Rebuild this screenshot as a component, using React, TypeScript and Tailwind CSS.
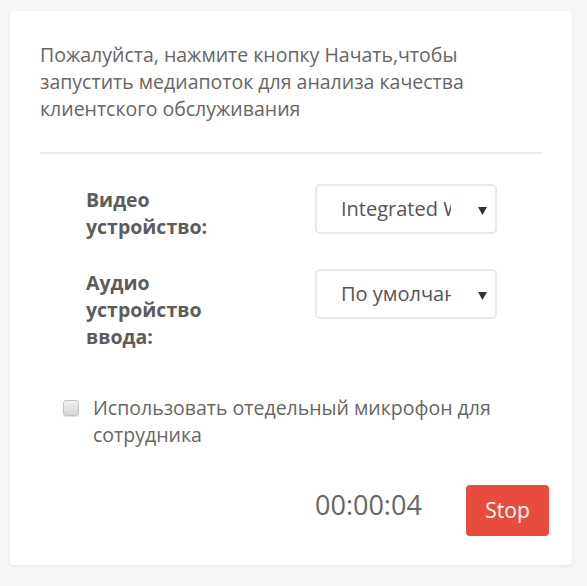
import { useState } from "react";

const Arrow = () => (
  <svg
    className="absolute right-[10px] top-[23px] pointer-events-none"
    width="9"
    height="8"
    viewBox="0 0 9 8"
  >
    <path d="M0 0 H9 L4.5 8 Z" fill="#333" />
  </svg>
);

const DeviceSelect = ({ value, options }: { value: string; options: string[] }) => {
  const [sel, setSel] = useState(value);
  return (
    <div className="relative ml-[89px] w-[182px] shrink-0">
      <select
        value={sel}
        onChange={(e) => setSel(e.target.value)}
        className="appearance-none w-full h-[50px] border-2 border-[#e8e8e8] rounded-[5px] bg-white pl-[24px] pr-[44px] text-[20px] text-[#555] outline-none"
      >
        {options.map((o) => (
          <option key={o} value={o}>
            {o}
          </option>
        ))}
      </select>
      <Arrow />
    </div>
  );
};

const App = () => {
  const [separateMic, setSeparateMic] = useState(false);

  return (
    <div
      className="min-h-screen bg-[#f5f6f8] pt-[11px] pl-[10px]"
      style={{ fontFamily: '"Open Sans", "Liberation Sans", sans-serif' }}
    >
      <div className="w-[562px] bg-white rounded-[4px] shadow-[0_1px_3px_rgba(0,0,0,0.08)] px-[30px] pt-[30px] pb-[29px]">
        <p className="text-[19.5px] leading-[27px] text-[#666] pr-[40px]">
          Пожалуйста, нажмите кнопку Начать,чтобы запустить медиапоток для анализа качества
          клиентского обслуживания
        </p>
        <div className="mt-[30px] h-[2px] bg-[#eee]" />

        {/* device selects */}
        <div className="mt-[30px] flex items-start">
          <label className="ml-[46px] w-[140px] shrink-0 pt-[2px] text-[19.5px] leading-[27px] font-bold text-[#5c5c5c]">
            Видео устройство:
          </label>
          <DeviceSelect value="Integrated Webcam" options={["Integrated Webcam"]} />
        </div>
        <div className="mt-[29px] flex items-start">
          <label className="ml-[46px] w-[140px] shrink-0 text-[19.5px] leading-[27px] font-bold text-[#5c5c5c]">
            Аудио устройство ввода:
          </label>
          <DeviceSelect value="По умолчанию" options={["По умолчанию"]} />
        </div>

        {/* separate mic */}
        <label className="mt-[44px] flex items-start">
          <input
            type="checkbox"
            checked={separateMic}
            onChange={(e) => setSeparateMic(e.target.checked)}
            className="appearance-none ml-[23px] mt-[6px] w-[16px] h-[16px] shrink-0 rounded-[3px] border border-[#c4c4c4] bg-linear-to-b from-[#f2f2f2] to-[#d6d6d6] shadow-[0_1px_1px_rgba(0,0,0,0.12)]"
          />
          <span className="ml-[14px] text-[19.5px] leading-[27px] text-[#666]">
            Использовать отедельный микрофон для сотрудника
          </span>
        </label>

        {/* timer + stop */}
        <div className="mt-[37px] flex items-start">
          <div className="ml-[275px] w-[151px] shrink-0 text-[27px] leading-[39px] text-[#666]">
            00:00:04
          </div>
          <button className="w-[83px] h-[51px] shrink-0 rounded-[4px] bg-[#e74c3c] text-white text-[21px]">
            Stop
          </button>
        </div>
      </div>
    </div>
  );
};

export default App;
